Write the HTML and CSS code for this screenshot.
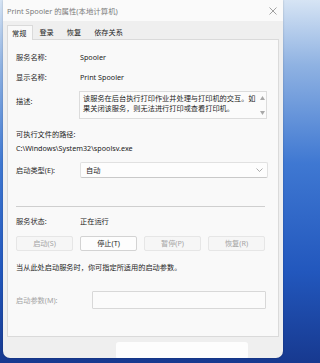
FILE: index.html
```html
<!DOCTYPE html>
<html lang="zh-CN">
<head>
<meta charset="utf-8">
<title>Print Spooler 的属性(本地计算机)</title>
<link rel="stylesheet" href="styles.css">
</head>
<body>
<div class="window">
  <div class="titlebar">
    <span class="title">Print Spooler 的属性(本地计算机)</span>
    <svg class="close" width="8" height="8" viewBox="0 0 8 8"><path d="M0.5 0.5 L7.5 7.5 M7.5 0.5 L0.5 7.5" stroke="#8a8a8a" stroke-width="0.8" fill="none"/></svg>
  </div>
  <div class="client">
    <div class="tabs">
      <div class="tab active">常规</div>
      <div class="tab">登录</div>
      <div class="tab">恢复</div>
      <div class="tab">依存关系</div>
    </div>
    <div class="panel">
      <div class="row"><span class="label">服务名称:</span><span class="value">Spooler</span></div>
      <div class="row"><span class="label">显示名称:</span><span class="value">Print Spooler</span></div>
      <div class="row desc-row">
        <span class="label">描述:</span>
        <div class="textarea">
          <div class="desc-text">该服务在后台执行打印作业并处理与打印机的交互。如果关闭该服务，则无法进行打印或查看打印机。</div>
          <div class="scroll">
            <svg width="5" height="4" viewBox="0 0 5 4"><path d="M0 4 L2.5 0 L5 4 Z" fill="#a8a8a8"/></svg>
            <svg width="5" height="4" viewBox="0 0 5 4"><path d="M0 0 L2.5 4 L5 0 Z" fill="#a8a8a8"/></svg>
          </div>
        </div>
      </div>
      <div class="path-label">可执行文件的路径:</div>
      <div class="path">C:\Windows\System32\spoolsv.exe</div>
      <div class="row select-row">
        <span class="label">启动类型(E):</span>
        <div class="select"><span>自动</span>
          <svg width="7" height="4" viewBox="0 0 7 4"><path d="M0.5 0.5 L3.5 3.5 L6.5 0.5" stroke="#8a8a8a" stroke-width="0.7" fill="none"/></svg>
        </div>
      </div>
      <div class="separator"></div>
      <div class="row status-row"><span class="label">服务状态:</span><span class="value">正在运行</span></div>
      <div class="buttons">
        <div class="btn disabled">启动(S)</div>
        <div class="btn">停止(T)</div>
        <div class="btn disabled">暂停(P)</div>
        <div class="btn disabled">恢复(R)</div>
      </div>
      <div class="hint">当从此处启动服务时，你可指定所适用的启动参数。</div>
      <div class="row param-row">
        <span class="label param-label">启动参数(M):</span>
        <div class="input"></div>
      </div>
    </div>
    <div class="footer">
      <div class="footer-btn"></div>
    </div>
  </div>
</div>
</body>
</html>
```
FILE: styles.css
```css
html, body {
  margin: 0;
  padding: 0;
}
body {
  width: 288px;
  height: 363px;
  overflow: hidden;
  background: linear-gradient(180deg, #d6e4f4 0%, #8fb2e2 18%, #3f78d2 45%, #2257bd 75%, #17398f 100%);
  font-family: "Noto Sans", "Noto Sans CJK SC", sans-serif;
  font-size: 7.2px;
  color: #1b1b1b;
}
.window {
  margin-left: 3px;
  width: 280px;
  height: 358px;
  background: #efefef;
  border-radius: 0 0 7px 7px;
  box-shadow: 0 0 2px rgba(0,0,0,0.25);
  display: flex;
  flex-direction: column;
  overflow: hidden;
}
.titlebar {
  height: 21px;
  background: #fafafa;
  display: flex;
  align-items: center;
  justify-content: space-between;
  padding: 0 6px 0 4px;
  flex: none;
}
.title {
  color: #7a7a7a;
  font-size: 7.4px;
}
.client {
  flex: 1;
  display: flex;
  flex-direction: column;
  padding: 0 4px 0 4px;
}
.tabs {
  height: 18px;
  display: flex;
  align-items: flex-end;
}
.tab {
  height: 13px;
  line-height: 13px;
  padding: 0 7px 0 6px;
}
.tab.active {
  height: 14px;
  line-height: 14px;
  background: #f9f9f9;
  border: 1px solid #dadada;
  border-bottom: none;
  margin-bottom: -1px;
  position: relative;
  z-index: 1;
  padding: 0 6px 0 4px;
}
.panel {
  height: 289px;
  background: #f9f9f9;
  border: 1px solid #dadada;
  padding: 7px 10px 0 8px;
  flex: none;
}
.row {
  display: flex;
  align-items: center;
  height: 20px;
}
.label {
  width: 64px;
  flex: none;
  color: #2b2b2b;
}
.desc-row {
  align-items: flex-start;
  margin-top: 4px;
  height: 28px;
}
.desc-row .label {
  line-height: 20px;
}
.textarea {
  margin-left: -1px;
  width: 186px;
  height: 26px;
  border: 1px solid #dcdcdc;
  background: #fbfbfb;
  display: flex;
  justify-content: space-between;
}
.desc-text {
  padding: 1px 0 0 3px;
  line-height: 10px;
  width: 176px;
  flex: none;
}
.scroll {
  width: 7px;
  display: flex;
  flex-direction: column;
  justify-content: space-between;
  align-items: center;
  padding: 4px 0 3px;
}
.path-label {
  margin-top: 8px;
  line-height: 14px;
}
.path {
  line-height: 14px;
}
.select-row {
  margin-top: 7px;
  height: 16px;
}
.select {
  width: 184px;
  height: 14px;
  border: 1px solid #e1e1e1;
  border-bottom-color: #c9c9c9;
  background: #fdfdfd;
  display: flex;
  align-items: center;
  justify-content: space-between;
  padding: 0 4px 0 5px;
  border-radius: 2px;
}
.separator {
  margin-top: 28px;
  height: 1px;
  background: #cfcfcf;
  width: 249px;
}
.status-row {
  margin-top: 4px;
}
.buttons {
  margin-top: 5px;
  display: grid;
  grid-template-columns: repeat(4, 57px);
  column-gap: 7px;
}
.btn {
  height: 13px;
  line-height: 13px;
  text-align: center;
  border: 1px solid #d3d3d3;
  border-radius: 2px;
  background: #fdfdfd;
}
.btn.disabled {
  color: #a4a4a4;
  background: #f6f6f6;
  border-color: #e6e6e6;
}
.hint {
  margin-top: 9px;
  line-height: 14px;
}
.param-row {
  margin-top: 17px;
  height: 18px;
}
.param-label {
  width: 76px;
  color: #a4a4a4;
}
.input {
  width: 172px;
  height: 16px;
  border: 1px solid #d8d8d8;
  background: #fbfbfb;
  border-radius: 1px;
}
.footer {
  flex: 1;
  position: relative;
}
.footer-btn {
  margin: 5px 0 0 109px;
  width: 132px;
  height: 17px;
  background: #fdfdfd;
  border-radius: 3px;
}
```
